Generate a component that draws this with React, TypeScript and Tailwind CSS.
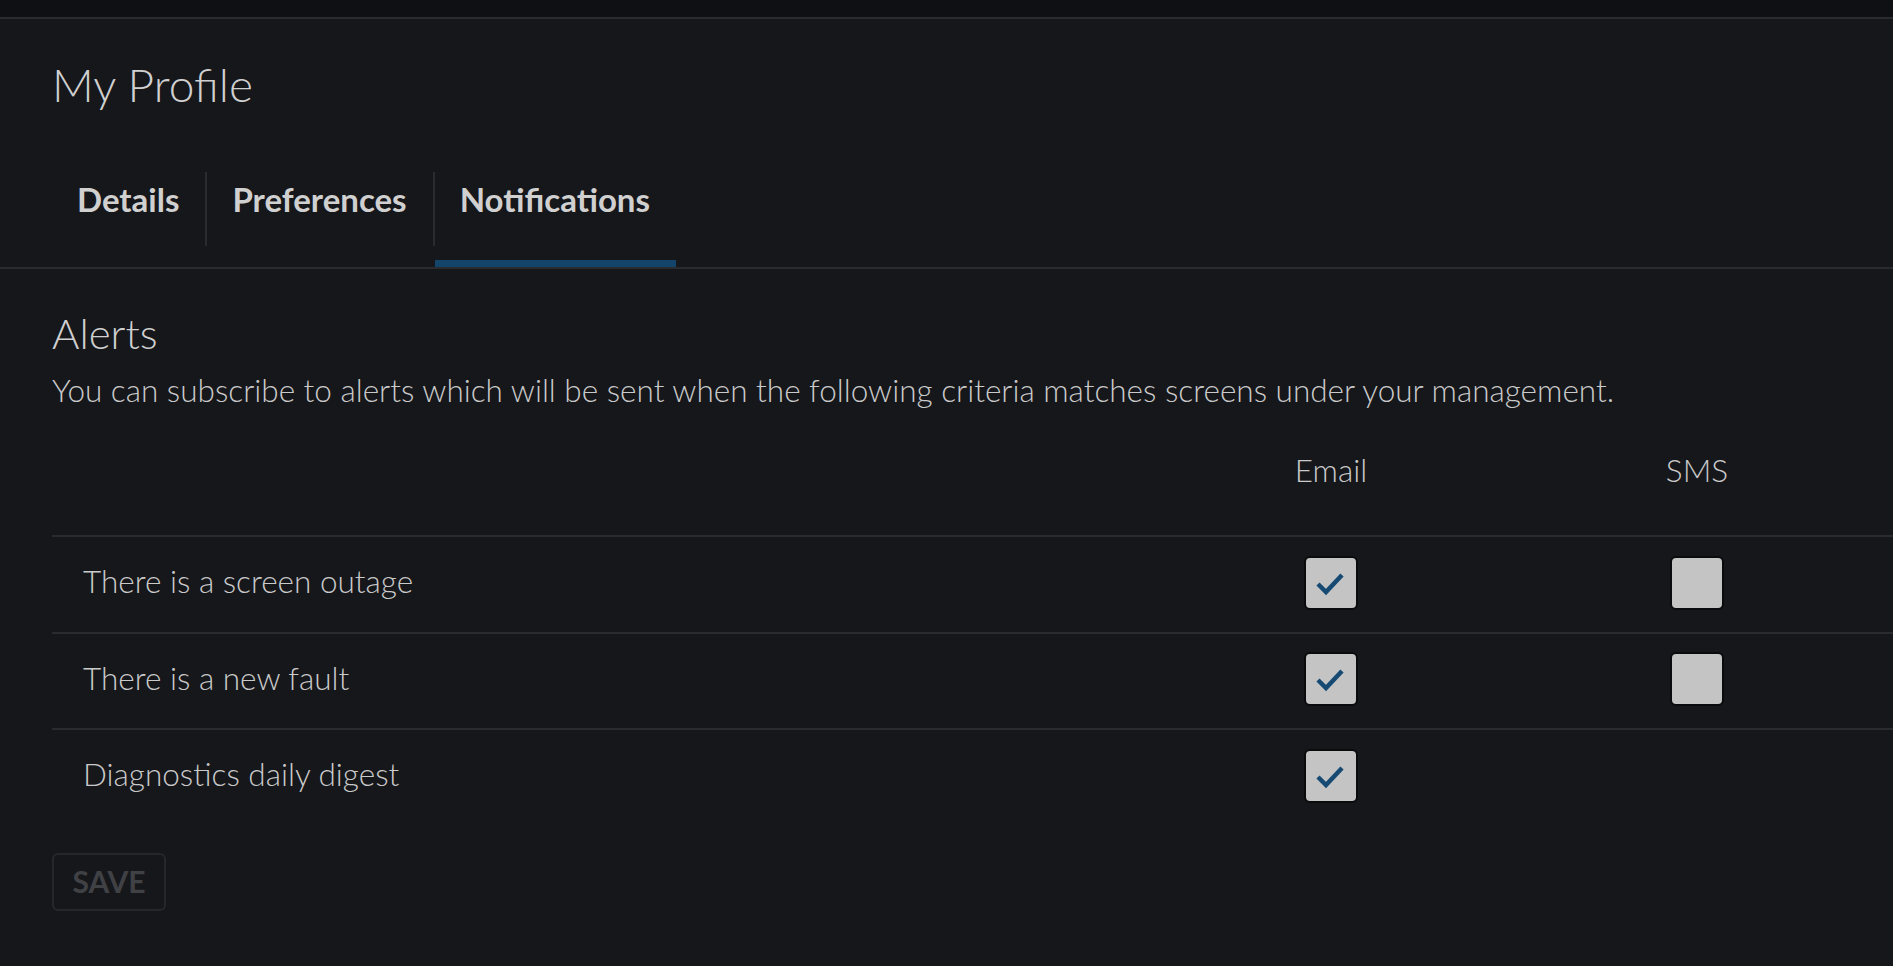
import React from "react";

function Box({ checked }: { checked: boolean }) {
  return (
    <div className="w-[54px] h-[54px] rounded-[6px] border-2 border-[#0a0b0d] bg-[#c4c4c4] flex items-center justify-center">
      {checked && (
        <svg width="50" height="50" viewBox="0 0 50 50">
          <polyline
            points="12,26 20,34 36,17"
            fill="none"
            stroke="#174a73"
            strokeWidth="4.5"
          />
        </svg>
      )}
    </div>
  );
}

const rows = [
  { label: "There is a screen outage", email: true, sms: false as boolean | null },
  { label: "There is a new fault", email: true, sms: false as boolean | null },
  { label: "Diagnostics daily digest", email: true, sms: null as boolean | null },
];

export default function App() {
  const tabs = ["Details", "Preferences", "Notifications"];
  return (
    <div className="min-h-screen w-full bg-[#16171b] text-[#cacaca] font-['Lato','Open_Sans',sans-serif]">
      <div className="h-[19px] bg-[#0f1013] border-b-2 border-[#2a2b2e]" />
      <div className="border-b-2 border-[#2a2b2e]">
        <div className="pl-[52px] pt-[39px]">
          <h1 className="text-[46px] leading-[54px] font-light text-[#d0d0d0]">My Profile</h1>
          <div className="mt-[60px] flex items-start">
            {tabs.map((t, i) => (
              <React.Fragment key={t}>
                {i > 0 && <div className="w-[2px] h-[74px] bg-[#2a2b2e]" />}
                <div className="flex flex-col">
                  <div className="h-[74px] pt-[7px] pl-[25px] pr-[26px] text-[33px] leading-[41px] font-bold text-[#d0d0d0] whitespace-nowrap">
                    {t}
                  </div>
                  <div className={"mt-[14px] h-[7px] " + (i === 2 ? "bg-[#134469]" : "bg-transparent")} />
                </div>
              </React.Fragment>
            ))}
          </div>
        </div>
      </div>

      <div className="pl-[52px] pt-[38px]">
        <h2 className="text-[42px] leading-[52px] font-light text-[#d0d0d0]">Alerts</h2>
        <p className="mt-[12px] text-[31.5px] leading-[38px] font-light whitespace-nowrap">
          You can subscribe to alerts which will be sent when the following criteria matches screens under your management.
        </p>

        <div className="grid grid-cols-[1fr_366px_366px] pr-[13px] pt-[42px] pb-[46px] text-[31.5px] leading-[38px] font-light">
          <div />
          <div className="text-center">Email</div>
          <div className="text-center">SMS</div>
        </div>

        {rows.map((r) => (
          <div
            key={r.label}
            className="grid grid-cols-[1fr_366px_366px] items-center pr-[13px] h-[96.5px] border-t-2 border-[#2a2b2e]"
          >
            <div className="pl-[31px] pb-[6px] text-[31.5px] leading-[38px] font-light">{r.label}</div>
            <div className="flex justify-center pb-[3px]">
              <Box checked={r.email} />
            </div>
            <div className="flex justify-center pb-[3px]">{r.sms !== null && <Box checked={r.sms} />}</div>
          </div>
        ))}

        <button
          disabled
          className="mt-[28px] w-[114px] h-[58px] rounded-[6px] border-2 border-[#26272b] text-[30px] font-bold text-[#404145] flex items-center justify-center"
        >
          SAVE
        </button>
      </div>
    </div>
  );
}
